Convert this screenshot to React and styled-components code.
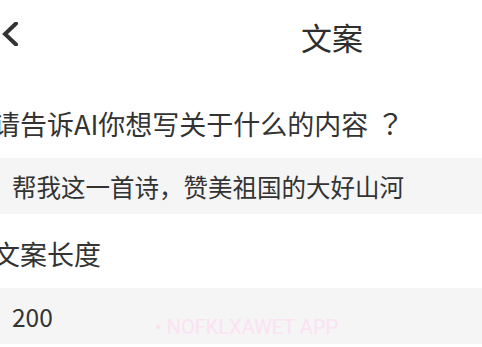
import React from "react";
import styled, { createGlobalStyle } from "styled-components";

const GlobalStyle = createGlobalStyle`
  html, body {
    margin: 0;
    padding: 0;
    background: #ffffff;
    overflow: hidden;
  }
  body {
    font-family: "Noto Sans CJK SC", "Noto Sans", sans-serif;
    color: #333333;
  }
`;

const Page = styled.div`
  width: 482px;
  min-height: 347px;
  background: #ffffff;
`;

const Header = styled.header`
  display: flex;
  align-items: center;
  height: 72px;
`;

const BackButton = styled.button`
  display: flex;
  align-items: center;
  justify-content: center;
  width: 20px;
  height: 40px;
  margin-top: -4px;
  padding: 0;
  border: none;
  background: transparent;
  cursor: pointer;
`;

const Title = styled.h1`
  margin: 0 119px 0 auto;
  font-size: 31px;
  font-weight: 400;
  line-height: 1;
  color: #2e2e2e;
`;

const Form = styled.div`
  display: flex;
  flex-direction: column;
`;

const Label = styled.div`
  margin: ${(p) => p.$top}px 0 15px -7px;
  font-size: 27px;
  line-height: 38px;
  color: #333333;
  white-space: nowrap;
  text-spacing-trim: space-all;
`;

const Mark = styled.span`
  display: inline-block;
  margin-left: 8px;
  font-family: "Noto Sans CJK TC", "Noto Sans CJK SC", sans-serif;
  font-size: 28px;
`;

const Field = styled.div`
  position: relative;
`;

const Input = styled.input`
  display: block;
  box-sizing: border-box;
  width: 100%;
  height: 56px;
  padding: 0 12px;
  border: none;
  outline: none;
  background: #f5f5f5;
  font-family: "Noto Sans CJK SC", "Noto Sans", sans-serif;
  font-size: 24.5px;
  color: #333333;
`;

const Watermark = styled.span`
  position: absolute;
  left: 155px;
  top: 27px;
  font-family: "Roboto", "Noto Sans", sans-serif;
  font-size: 20px;
  color: #fbe2f3;
  pointer-events: none;
`;

const ChevronLeft = () => (
  <svg width="18" height="24" viewBox="0 0 18 24" fill="none">
    <polyline
      points="15,1.5 4,12 15,22.5"
      stroke="#333333"
      strokeWidth="4"
      strokeLinecap="round"
      strokeLinejoin="miter"
    />
  </svg>
);

export default function App() {
  return (
    <Page>
      <GlobalStyle />
      <Header>
        <BackButton aria-label="返回">
          <ChevronLeft />
        </BackButton>
        <Title>文案</Title>
      </Header>
      <Form>
        <Label $top={32}>
          请告诉AI你想写关于什么的内容<Mark>？</Mark>
        </Label>
        <Field>
          <Input readOnly defaultValue="帮我这一首诗，赞美祖国的大好山河" />
        </Field>
        <Label $top={21}>文案长度</Label>
        <Field>
          <Input readOnly defaultValue="200" />
          <Watermark>• NOFKLXAWET APP</Watermark>
        </Field>
      </Form>
    </Page>
  );
}
